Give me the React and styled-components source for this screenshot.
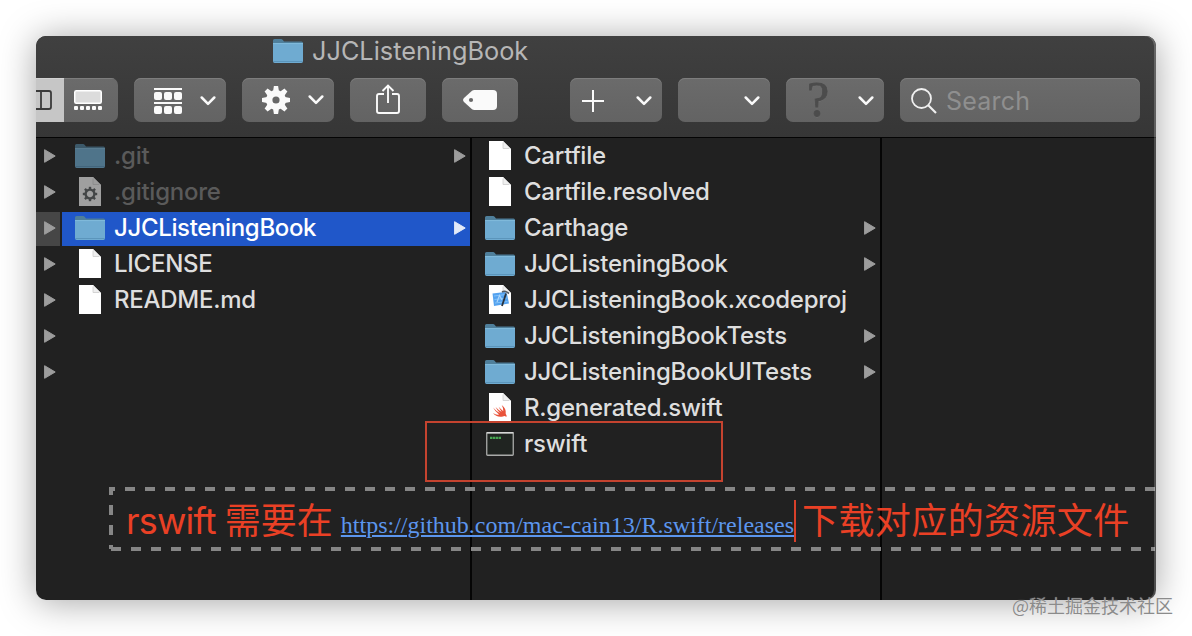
import React from "react";
import styled, { createGlobalStyle } from "styled-components";

const GlobalStyle = createGlobalStyle`
  * {
    box-sizing: border-box;
  }

  body {
    margin: 0;
    background: #fff;
    font-family: Inter, "Noto Sans CJK SC", sans-serif;
  }
`;

const Page = styled.div`
  position: relative;
  width: 1192px;
  height: 636px;
  padding: 36px;
  overflow: hidden;
`;

const Window = styled.div`
  display: flex;
  flex-direction: column;
  width: 1120px;
  height: 564px;
  border-radius: 10px;
  overflow: hidden;
  background: #212121;
`;

const WindowShadow = styled.div`
  width: 1120px;
  height: 564px;
  border-radius: 10px;
  box-shadow: 0 2px 36px rgba(0, 0, 0, 0.36);
`;

const Header = styled.div`
  height: 102px;
  flex: none;
  background: linear-gradient(#404040, #363636);
  border-bottom: 1px solid #040404;
`;

const TitleBar = styled.div`
  display: flex;
  align-items: center;
  height: 30px;
  padding-left: 237px;
  gap: 9px;
  margin-bottom: 12px;
`;

const Title = styled.span`
  margin-top: -2px;
  font-size: 25.3px;
  color: #b6b6b6;
`;

const Toolbar = styled.div`
  display: flex;
  gap: 16px;
`;

const Spacer = styled.div`
  width: 20px;
`;

const Button = styled.div`
  display: flex;
  align-items: center;
  width: ${(props) => props.$width}px;
  height: 44px;
  padding: ${(props) => props.$padding || "0"};
  justify-content: ${(props) => props.$justify || "space-between"};
  border-radius: 7px;
  background: linear-gradient(#6b6b6b, #636363);
  box-shadow: inset 0 1px 0 #7d7d7d;
`;

const ViewSwitch = styled.div`
  display: flex;
  width: 82px;
  height: 44px;
  border-radius: 0 7px 7px 0;
  overflow: hidden;
`;

const ViewOption = styled.div`
  display: flex;
  align-items: center;
  width: ${(props) => (props.$active ? 28 : 54)}px;
  padding-left: ${(props) => (props.$active ? 0 : 10)}px;
  background: ${(props) =>
    props.$active ? "#c6c6c6" : "linear-gradient(#6b6b6b, #636363)"};
  box-shadow: inset 0 1px 0 ${(props) => (props.$active ? "#d2d2d2" : "#7d7d7d")};
`;

const Help = styled.span`
  margin-top: -4px;
  font-family: "Liberation Serif", serif;
  font-size: 50px;
  line-height: 44px;
  color: #4c4c4c;
  -webkit-text-stroke: 0.8px #4c4c4c;
  text-shadow: 0 1px 0 #737373;
`;

const SearchField = styled(Button)`
  justify-content: flex-start;
  gap: 9px;
`;

const SearchText = styled.span`
  font-size: 25px;
  color: #8f8f8f;
  letter-spacing: 0.2px;
`;

const Columns = styled.div`
  display: flex;
  flex: 1;
`;

const Column = styled.div`
  width: ${(props) => props.$width}px;
  border-right: ${(props) => (props.$last ? "0" : "2px solid #050505")};
`;

const Row = styled.div`
  display: flex;
  align-items: center;
  height: 34px;
  margin-top: 2px;
  padding: 0 4px 2px ${(props) => (props.$strip ? 8 : 13)}px;
  background: ${(props) => props.$bg || "transparent"};
`;

const IconSlot = styled.span`
  display: flex;
  justify-content: center;
  width: 30px;
  margin-right: 9px;
  flex: none;
  opacity: ${(props) => (props.$dim ? 0.6 : 1)};
`;

const Label = styled.span`
  flex: 1;
  white-space: nowrap;
  font-size: 24px;
  font-weight: ${(props) => (props.$selected ? 500 : 450)};
  line-height: 32px;
  letter-spacing: ${(props) => (props.$selected ? -0.35 : -0.25)}px;
  color: ${(props) =>
    props.$selected ? "#fff" : props.$dim ? "#5a5a5a" : "#dedede"};
`;

const Highlight = styled.div`
  position: absolute;
  left: 425px;
  top: 421px;
  width: 298px;
  height: 61px;
  border: 2px solid #c5432f;
`;

const Note = styled.div`
  position: absolute;
  left: 109px;
  top: 487px;
  width: 1046px;
  height: 64px;
  display: flex;
  align-items: center;
  padding-left: 17px;
  white-space: nowrap;
  color: #ea4025;
  font-size: 36px;
  background:
    repeating-linear-gradient(90deg, #868686 0 10px, transparent 10px 20px) -4px 0 /
      1100px 4px no-repeat,
    repeating-linear-gradient(90deg, #868686 0 10px, transparent 10px 20px) 2px
      100% / 1100px 4px no-repeat,
    repeating-linear-gradient(#868686 0 10px, transparent 10px 20px) 0 -2px / 4px
      64px no-repeat;
`;

const NoteText = styled.span`
  margin: 3px 0 0 ${(props) => props.$left || 0}px;
  line-height: 40px;
  letter-spacing: ${(props) => props.$spacing || 0}px;
`;

const NoteLink = styled.span`
  margin: 13px 0 0 8px;
  font-family: "Liberation Serif", serif;
  font-size: 24px;
  color: #5c96ee;
  text-decoration: underline;
  text-decoration-thickness: 2px;
  text-underline-offset: 2px;
`;

const Caret = styled.span`
  width: 2px;
  height: 42px;
  margin: 3px 6px 0 0;
  background: #d8402a;
`;

const RightEdge = styled.div`
  position: absolute;
  left: 36px;
  top: 36px;
  width: 1120px;
  height: 564px;
  border-radius: 10px;
  box-shadow: inset -2px 0 0 rgba(255, 255, 255, 0.2);
`;

const Watermark = styled.div`
  position: absolute;
  left: 1012px;
  top: 593px;
  font-family: "Noto Sans CJK SC", sans-serif;
  font-size: 18px;
  line-height: 24px;
  white-space: nowrap;
  color: #8b8b8b;
  text-shadow: 0 0 1px rgba(255, 255, 255, 0.5);
`;

const Folder = () => (
  <svg width="30" height="24" viewBox="0 0 30 24">
    <path
      d="M0 1.5Q0 0 1.5 0H8Q9 0 10 1.2L11 2.4H28.5Q30 2.4 30 4V10H0Z"
      fill="#4f7f9b"
    />
    <path d="M0 5H30V22Q30 24 28.4 24H1.6Q0 24 0 22Z" fill="#6fabd1" />
    <path d="M0 4.6H30" stroke="#85bfe0" strokeWidth="1" />
    <path d="M.5 22.5H29.5" stroke="#5b95bb" strokeWidth="1" />
  </svg>
);

const Doc = ({ children, fill = "#fff" }) => (
  <svg width="22" height="30" viewBox="0 0 22 30">
    <path d="M0 0H14L22 8V29H0Z" fill={fill} />
    <path d="M14 0V6.5Q14 8 15.5 8H22Z" fill="#efefef" />
    <path d="M14 1.5V7.5H20" fill="none" stroke="#c9c9c9" strokeWidth=".7" />
    {children}
  </svg>
);

const teeth = [0, 45, 90, 135, 180, 225, 270, 315];

const GearDoc = () => (
  <Doc fill="#f4f4f4">
    <g transform="translate(11 17)">
      <circle r="4.4" fill="none" stroke="#5b5f61" strokeWidth="2.4" />
      {teeth.map((a) => (
        <rect
          key={a}
          x="-1.2"
          y="-7.2"
          width="2.4"
          height="2.6"
          fill="#5b5f61"
          transform={`rotate(${a})`}
        />
      ))}
    </g>
  </Doc>
);

const XcodeDoc = () => (
  <Doc>
    <path d="M3.5 8.5L16 7L18 9L20 18.5L5 21Z" fill="#54a2ef" />
    <path d="M5 11L17 9.5M5.5 14.5L18 13M6 18L18.5 16.5" stroke="#83c3fa" />
    <path d="M8 17L10.5 10.5L13 15" fill="none" stroke="#a9d5fb" strokeWidth="1.2" />
    <path d="M17 8.5L13 21" stroke="#29323c" strokeWidth="1.8" />
    <path d="M13 7Q15.5 5.5 18 7.2L20 8.5" fill="none" stroke="#555d66" strokeWidth="1.6" />
  </Doc>
);

const SwiftDoc = () => (
  <Doc>
    <path
      d="M4 14.5Q8 19 11.2 20.2Q8 17 6.5 14Q10 17.5 12.7 19Q11 16.5 9.6 13.8Q12.5 16.8 14.3 18.2Q14.7 15.6 12.7 12Q17.7 16 16.7 20.8Q18.3 23 17.3 24Q15.7 22.4 14 23.4Q8 25 4 20Q7.5 22.3 10 21.4Q6.5 19 4 14.5Z"
      fill="#e9533b"
    />
  </Doc>
);

const Terminal = () => (
  <svg width="28" height="24" viewBox="0 0 28 24">
    <rect x=".75" y=".75" width="26.5" height="22.5" rx=".8" fill="#202421" stroke="#a9aaa9" strokeWidth="1.3" />
    <path d="M.5 .8H27.5" stroke="#e2e2e2" strokeWidth="1.2" />
    <path d="M4 5.8H15" stroke="#47a551" strokeWidth="2.2" strokeDasharray="2.4 .5" />
  </svg>
);

const Arrow = ({ fill = "#9d9d9d" }) => (
  <svg width="12" height="14" viewBox="0 0 12 14">
    <path d="M.6 .7L11.2 7L.6 13.3Z" fill={fill} stroke={fill} strokeLinejoin="round" />
  </svg>
);

const Chevron = () => (
  <svg width="16" height="10" viewBox="0 0 16 10">
    <path
      d="M1.7 1.5L8 7.8L14.3 1.5"
      fill="none"
      stroke="#fafafa"
      strokeWidth="2.5"
      strokeLinecap="round"
      strokeLinejoin="round"
    />
  </svg>
);

const ColumnsIcon = () => (
  <svg width="16" height="20" viewBox="0 0 16 20">
    <path d="M0 1H13Q15 1 15 3V17Q15 19 13 19H0M5 1V19" fill="none" stroke="#3b3b3b" strokeWidth="1.8" />
  </svg>
);

const GalleryIcon = () => (
  <svg width="28" height="20" viewBox="0 0 28 20">
    <rect x=".75" y=".75" width="26.5" height="12.5" rx="1.5" fill="#dcdcdc" stroke="#fff" strokeWidth="1.5" />
    {[0, 6, 12, 18, 24].map((x) => (
      <rect key={x} x={x} y="16" width="4" height="4" rx="1" fill="#fafafa" />
    ))}
  </svg>
);

const GroupIcon = () => (
  <svg width="28" height="26" viewBox="0 0 28 26">
    <path d="M0 1H28M0 15H28" stroke="#fafafa" strokeWidth="2" />
    {[4, 18].map((y) =>
      [0, 10, 20].map((x) => (
        <rect key={x + "-" + y} x={x} y={y} width="8" height="8" rx="2" fill="#fafafa" />
      ))
    )}
  </svg>
);

const GearIcon = () => (
  <svg width="28" height="28" viewBox="-14 -14 28 28">
    <circle r="6.8" fill="none" stroke="#fafafa" strokeWidth="6.4" />
    {teeth.map((a) => (
      <path key={a} d="M-2.9 -9L-2.1 -14H2.1L2.9 -9Z" fill="#fafafa" transform={`rotate(${a})`} />
    ))}
  </svg>
);

const ShareIcon = () => (
  <svg width="24" height="30" viewBox="0 0 24 30">
    <path
      d="M8 10H3Q1 10 1 12V27Q1 29 3 29H21Q23 29 23 27V12Q23 10 21 10H16M12 19V1.5M6.5 7L12 1.5L17.5 7"
      fill="none"
      stroke="#fafafa"
      strokeWidth="1.9"
    />
  </svg>
);

const TagIcon = () => (
  <svg width="34" height="20" viewBox="0 0 34 20">
    <path d="M9 .8Q10 0 11.5 0H30Q34 0 34 4V16Q34 20 30 20H11.5Q10 20 9 19.2L1 12Q-.9 10 1 8Z" fill="#fafafa" />
    <circle cx="8" cy="10" r="2.1" fill="#686868" />
  </svg>
);

const PlusIcon = () => (
  <svg width="22" height="22" viewBox="0 0 22 22">
    <path d="M11 0V22M0 11H22" stroke="#fafafa" strokeWidth="2" />
  </svg>
);

const SearchIcon = () => (
  <svg width="26" height="26" viewBox="0 0 26 26">
    <circle cx="10.5" cy="10.5" r="9.5" fill="none" stroke="#f0f0f0" strokeWidth="1.8" />
    <path d="M17 17L25 25" stroke="#f0f0f0" strokeWidth="2.1" />
  </svg>
);

const icons = {
  folder: Folder,
  doc: Doc,
  gear: GearDoc,
  xcode: XcodeDoc,
  swift: SwiftDoc,
  terminal: Terminal,
};

const projectFiles = [
  { name: ".git", icon: "folder", arrow: true, dim: true },
  { name: ".gitignore", icon: "gear", dim: true },
  { name: "JJCListeningBook", icon: "folder", arrow: true, selected: true },
  { name: "LICENSE", icon: "doc" },
  { name: "README.md", icon: "doc" },
];

const bookFiles = [
  { name: "Cartfile", icon: "doc" },
  { name: "Cartfile.resolved", icon: "doc" },
  { name: "Carthage", icon: "folder", arrow: true },
  { name: "JJCListeningBook", icon: "folder", arrow: true },
  { name: "JJCListeningBook.xcodeproj", icon: "xcode" },
  { name: "JJCListeningBookTests", icon: "folder", arrow: true },
  { name: "JJCListeningBookUITests", icon: "folder", arrow: true },
  { name: "R.generated.swift", icon: "swift" },
  { name: "rswift", icon: "terminal" },
];

function FileRow({ file }) {
  const Icon = icons[file.icon];
  return (
    <Row $bg={file.selected && "#2057c9"}>
      <IconSlot $dim={file.dim}>
        <Icon />
      </IconSlot>
      <Label $dim={file.dim} $selected={file.selected}>
        {file.name}
      </Label>
      {file.arrow && <Arrow fill={file.selected ? "#e3eaf8" : undefined} />}
    </Row>
  );
}

function App() {
  return (
    <Page>
      <GlobalStyle />
      <WindowShadow>
        <Window>
          <Header>
            <TitleBar>
              <Folder />
              <Title>JJCListeningBook</Title>
            </TitleBar>
            <Toolbar>
              <ViewSwitch>
                <ViewOption $active>
                  <ColumnsIcon />
                </ViewOption>
                <ViewOption>
                  <GalleryIcon />
                </ViewOption>
              </ViewSwitch>
              <Button $width={92} $padding="2px 10px 0 20px">
                <GroupIcon />
                <Chevron />
              </Button>
              <Button $width={92} $padding="0 10px 0 20px">
                <GearIcon />
                <Chevron />
              </Button>
              <Button $width={76} $justify="center" $padding="0 0 2px">
                <ShareIcon />
              </Button>
              <Button $width={76} $justify="center">
                <TagIcon />
              </Button>
              <Spacer />
              <Button $width={92} $padding="2px 10px 0 12px">
                <PlusIcon />
                <Chevron />
              </Button>
              <Button $width={92} $padding="1px 10px 0 0" $justify="flex-end">
                <Chevron />
              </Button>
              <Button $width={98} $padding="1px 10px 0 21px">
                <Help>?</Help>
                <Chevron />
              </Button>
              <SearchField $width={240} $padding="2px 0 0 11px">
                <SearchIcon />
                <SearchText>Search</SearchText>
              </SearchField>
            </Toolbar>
          </Header>
          <Columns>
            <Column $width={26} $last>
              {[0, 1, 2, 3, 4, 5, 6].map((i) => (
                <Row
                  key={i}
                  $strip
                  $bg={i === 2 && "linear-gradient(90deg, #464646 24px, #212121 24px)"}
                >
                  <Arrow />
                </Row>
              ))}
            </Column>
            <Column $width={410}>
              {projectFiles.map((file) => (
                <FileRow key={file.name} file={file} />
              ))}
            </Column>
            <Column $width={410}>
              {bookFiles.map((file) => (
                <FileRow key={file.name} file={file} />
              ))}
            </Column>
          </Columns>
        </Window>
      </WindowShadow>
      <Highlight />
      <Note>
        <NoteText $spacing={-0.8}>rswift</NoteText>
        <NoteText $left={9}>需要在</NoteText>
        <NoteLink>https://github.com/mac-cain13/R.swift/releases</NoteLink>
        <Caret />
        <NoteText $spacing={0.4}>下载对应的资源文件</NoteText>
      </Note>
      <RightEdge />
      <Watermark>@稀土掘金技术社区</Watermark>
    </Page>
  );
}

export default App;
